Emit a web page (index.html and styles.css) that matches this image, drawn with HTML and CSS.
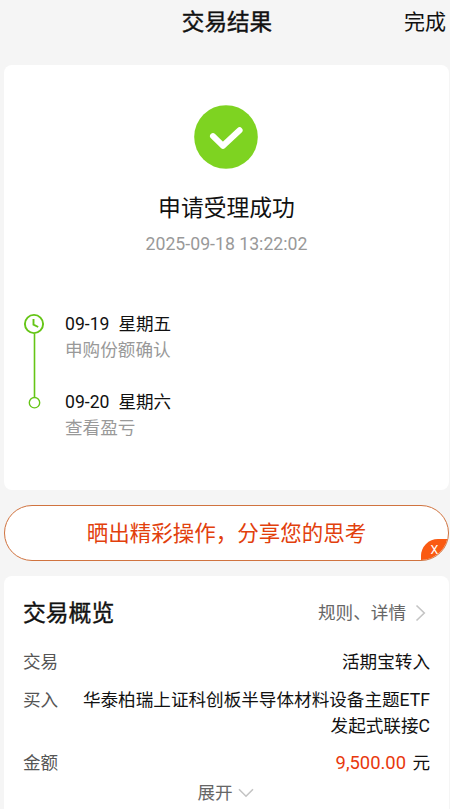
FILE: index.html
```html
<!DOCTYPE html>
<html lang="zh-CN">
<head>
  <meta charset="UTF-8" />
  <meta name="viewport" content="width=device-width, initial-scale=1.0"/>
  <title>交易结果</title>
  <link rel="stylesheet" href="styles.css">
</head>
<body>

<header class="top-bar">
  <h1 class="title">交易结果</h1>
  <span class="done">完成</span>
</header>

<section class="card result">
  <svg class="success" viewBox="0 0 64 64">
    <circle cx="32" cy="32" r="31.8" fill="#7ed321"/>
    <path d="M19 31.2 L29 40.8 L45.6 25.2" fill="none" stroke="#fff" stroke-width="6" stroke-linecap="round" stroke-linejoin="round"/>
  </svg>
  <h2 class="status">申请受理成功</h2>
  <p class="time">2025-09-18 13:22:02</p>

  <div class="timeline">
    <svg class="track" viewBox="0 0 22 100">
      <circle cx="11" cy="11" r="9.1" fill="none" stroke="#65c516" stroke-width="1.9"/>
      <path d="M10.5 6 V11.6 L15.2 14" fill="none" stroke="#65c516" stroke-width="1.9"/>
      <path d="M11.5 20.5 V84" stroke="#65c516" stroke-width="1.6"/>
      <circle cx="11.5" cy="89.7" r="5.2" fill="#fff" stroke="#65c516" stroke-width="1.4"/>
    </svg>
    <div class="steps">
      <div class="step">
        <p class="day"><span>09-19</span><span>星期五</span></p>
        <p class="note">申购份额确认</p>
      </div>
      <div class="step">
        <p class="day"><span>09-20</span><span>星期六</span></p>
        <p class="note">查看盈亏</p>
      </div>
    </div>
  </div>
</section>

<div class="share">
  <span>晒出精彩操作，分享您的思考</span>
  <span class="close">X</span>
</div>

<section class="card overview">
  <div class="overview-head">
    <h2>交易概览</h2>
    <span class="rules">规则、详情
      <svg width="11" height="18" viewBox="0 0 11 18"><path d="M1.5 1.5 L9.3 9 L1.5 16.5" fill="none" stroke="#c4c4c4" stroke-width="1.6"/></svg>
    </span>
  </div>
  <div class="row">
    <span class="label">交易</span>
    <span class="value">活期宝转入</span>
  </div>
  <div class="row">
    <span class="label">买入</span>
    <span class="value">华泰柏瑞上证科创板半导体材料设备主题ETF<br>发起式联接C</span>
  </div>
  <div class="row">
    <span class="label">金额</span>
    <span class="value"><span class="amount">9,500.00</span> 元</span>
  </div>
  <div class="expand">展开
    <svg width="16" height="10" viewBox="0 0 16 10"><path d="M1 1.2 L8 8.2 L15 1.2" fill="none" stroke="#c4c4c4" stroke-width="1.6"/></svg>
  </div>
</section>

</body>
</html>
```

FILE: styles.css
```css
* { box-sizing: border-box; margin: 0; padding: 0; }
body {
  font-family: Roboto, 'Noto Sans CJK SC', sans-serif;
  font-size: 17.6px;
  line-height: 26px;
  color: #111;
  background: #f5f5f5;
  height: 809px;
  overflow: hidden;
}
h1, h2 {
  font-weight: 400;
}
svg {
  display: block;
  flex: none;
}
.top-bar {
  display: grid;
  grid-template-columns: 1fr auto 1fr;
  align-items: center;
  height: 65px;
  padding: 1px 4px 20px;
}
.title {
  grid-column: 2;
  margin-left: 4px;
  font-size: 22.6px;
  -webkit-text-stroke: 0.4px #111;
}
.done {
  justify-self: end;
  margin-bottom: 2px;
  font-size: 21px;
}
.card {
  margin: 0 1px 0 4px;
  background: #fff;
  border-radius: 8px;
}
.result {
  display: flex;
  flex-direction: column;
  align-items: center;
  height: 425px;
  padding-top: 40px;
}
.success {
  width: 64px;
  height: 64px;
  margin-right: 1px;
}
.status {
  margin-top: 24px;
  font-size: 22.8px;
  line-height: 32px;
}
.time {
  margin-top: 7px;
  line-height: 24px;
  font-size: 17.7px;
  color: #999;
}
.timeline {
  display: flex;
  align-self: stretch;
  gap: 20px;
  margin-top: 54px;
  padding-left: 19px;
}
.track {
  width: 22px;
  height: 100px;
  margin-top: 3px;
}
.steps {
  display: flex;
  flex-direction: column;
  gap: 26px;
  padding-top: 1px;
}
.step {
  line-height: 26px;
}
.day {
  display: flex;
  gap: 9px;
}
.note {
  color: #999;
}
.share {
  position: relative;
  display: flex;
  align-items: center;
  justify-content: center;
  height: 56px;
  margin: 15px 1px 15px 4px;
  padding-top: 1px;
  font-size: 21.5px;
  color: #e2400c;
  background: #fff;
  border: 1px solid #d0733f;
  border-radius: 28px;
  overflow: hidden;
}
.close {
  position: absolute;
  right: 0;
  bottom: 0;
  width: 27px;
  height: 21px;
  font-size: 12.5px;
  line-height: 22px;
  text-align: center;
  color: #fff;
  background: #fa5a12;
  border-top-left-radius: 17px;
}
.overview {
  height: 240px;
  padding: 21px 19px 0;
}
.overview-head {
  display: flex;
  align-items: center;
  justify-content: space-between;
  height: 34px;
  margin-bottom: 18px;
}
.overview-head h2 {
  font-size: 22.8px;
  -webkit-text-stroke: 0.4px #111;
}
.rules {
  display: flex;
  align-items: center;
  gap: 9px;
  padding-right: 4px;
  margin-top: -3px;
  color: #666;
}
.row {
  display: flex;
  justify-content: space-between;
  margin-bottom: 11.5px;
}
.label {
  color: #555;
}
.value {
  text-align: right;
}
.amount {
  margin-right: 2px;
  font-size: 18.4px;
  color: #e8380d;
}
.expand {
  display: flex;
  align-items: center;
  justify-content: center;
  gap: 5px;
  margin: -8px 2px 0 0;
  color: #666;
}
```
